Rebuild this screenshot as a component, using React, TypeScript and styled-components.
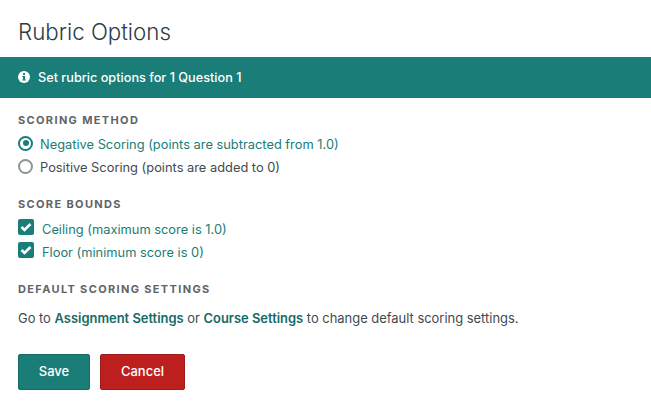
import React from 'react';
import styled, { createGlobalStyle } from 'styled-components';

const Colors = {
  teal: '#1a7d78',
  tealDark: '#156a66',
  red: '#bd1f1f',
  redDark: '#a01a1a',
  heading: '#2d3b45',
  label: '#5f6468',
  text: '#3f4a50',
  radioOff: '#8f9498',
};

const GlobalStyle = createGlobalStyle`
  * { margin: 0; padding: 0; box-sizing: border-box; }
  html, body { background: #fff; }
  body { font-family: 'Inter', 'Lato', sans-serif; color: ${Colors.text}; overflow: hidden; }
`;

const Page = styled.div`
  width: 651px;
  height: 408px;
  display: flex;
  flex-direction: column;
`;

const Title = styled.h1`
  height: 57px;
  padding: 18px 18px 0;
  font-size: 22.3px;
  line-height: 28px;
  font-weight: 300;
  color: ${Colors.heading};
`;

const Banner = styled.div`
  height: 41px;
  background: ${Colors.teal};
  color: #fff;
  display: flex;
  align-items: center;
  gap: 8px;
  padding: 0 18px 1px;
  font-size: 12.7px;
  font-weight: 500;
`;

const Body = styled.div`
  display: flex;
  flex-direction: column;
  padding: 15px 18px 0;
`;

const SectionLabel = styled.h2`
  font-size: 11px;
  line-height: 15px;
  font-weight: 700;
  letter-spacing: 1.35px;
  color: ${Colors.label};
  text-transform: uppercase;
`;

const OptionList = styled.div<{ $before: number }>`
  display: flex;
  flex-direction: column;
  gap: 3px;
  margin: ${p => p.$before}px 0 20px;
`;

const Option = styled.div`
  display: flex;
  align-items: center;
  height: 20px;
`;

const OptionText = styled.span<{ $active?: boolean; $gap: number }>`
  margin-left: ${p => p.$gap}px;
  font-size: 12.85px;
  color: ${p => (p.$active ? Colors.teal : Colors.text)};
`;

const Radio = styled.span<{ $checked?: boolean }>`
  width: 15px;
  height: 15px;
  margin-top: -2px;
  border-radius: 50%;
  border: 2px solid ${p => (p.$checked ? Colors.teal : Colors.radioOff)};
  display: flex;
  align-items: center;
  justify-content: center;
  &::after {
    content: '';
    display: ${p => (p.$checked ? 'block' : 'none')};
    width: 6px;
    height: 6px;
    border-radius: 50%;
    background: ${Colors.teal};
  }
`;

const Checkbox = styled.span`
  width: 16px;
  height: 16px;
  border-radius: 2px;
  background: ${Colors.teal};
  display: flex;
  align-items: center;
  justify-content: center;
  margin-top: -5px;
`;

const Help = styled.p`
  margin-top: 11px;
  font-size: 12.93px;
  line-height: 20px;
  color: ${Colors.text};
`;

const HelpLink = styled.a`
  color: ${Colors.tealDark};
  font-weight: 600;
`;

const Actions = styled.div`
  display: flex;
  gap: 10px;
  margin-top: 26px;
`;

const Button = styled.button<{ $danger?: boolean; $width: number }>`
  width: ${p => p.$width}px;
  height: 36px;
  padding-bottom: 2px;
  border-radius: 2px;
  border: 1px solid ${p => (p.$danger ? Colors.redDark : Colors.tealDark)};
  background: ${p => (p.$danger ? Colors.red : Colors.teal)};
  color: #fff;
  font-family: inherit;
  font-size: 13px;
  font-weight: 500;
`;

const InfoIcon = () => (
  <svg width="12" height="12" viewBox="0 0 14 14">
    <circle cx="7" cy="7" r="7" fill="#fff" />
    <rect x="5.9" y="2.5" width="2.3" height="2.2" fill={Colors.teal} />
    <path d="M5.1 5.9h3.1v4h.8v1.3H5.1V9.9h.8V7.2h-.8z" fill={Colors.teal} />
  </svg>
);

const CheckIcon = () => (
  <svg width="12" height="10" viewBox="0 0 12 10">
    <path d="M1.5 5l3 3 6-6" fill="none" stroke="#fff" strokeWidth="2.6" />
  </svg>
);

const App: React.FC = () => (
  <Page>
    <GlobalStyle />
    <Title>Rubric Options</Title>
    <Banner>
      <InfoIcon />
      Set rubric options for 1 Question 1
    </Banner>
    <Body>
      <SectionLabel>Scoring Method</SectionLabel>
      <OptionList $before={6}>
        <Option>
          <Radio $checked />
          <OptionText $active $gap={7}>Negative Scoring (points are subtracted from 1.0)</OptionText>
        </Option>
        <Option>
          <Radio />
          <OptionText $gap={7}>Positive Scoring (points are added to 0)</OptionText>
        </Option>
      </OptionList>
      <SectionLabel>Score Bounds</SectionLabel>
      <OptionList $before={7}>
        <Option>
          <Checkbox><CheckIcon /></Checkbox>
          <OptionText $active $gap={8}>Ceiling (maximum score is 1.0)</OptionText>
        </Option>
        <Option>
          <Checkbox><CheckIcon /></Checkbox>
          <OptionText $active $gap={8}>Floor (minimum score is 0)</OptionText>
        </Option>
      </OptionList>
      <SectionLabel>Default Scoring Settings</SectionLabel>
      <Help>
        Go to <HelpLink>Assignment Settings</HelpLink> or <HelpLink>Course Settings</HelpLink> to change default scoring settings.
      </Help>
      <Actions>
        <Button $width={72}>Save</Button>
        <Button $danger $width={85}>Cancel</Button>
      </Actions>
    </Body>
  </Page>
);

export default App;
